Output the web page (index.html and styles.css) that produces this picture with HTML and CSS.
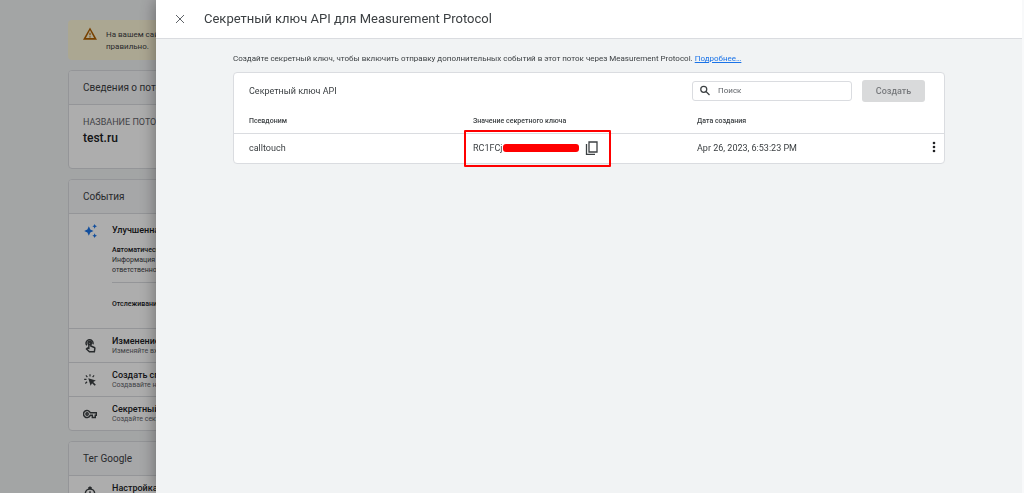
FILE: index.html
```html
<!DOCTYPE html>
<html lang="ru">
<head>
<meta charset="utf-8">
<title>Секретный ключ API для Measurement Protocol</title>
<link rel="stylesheet" href="styles.css">
</head>
<body>
<main class="page">
  <div class="banner">
    <svg class="icon" viewBox="0 0 24 24" fill="#b06000"><path d="M12 5.500 19 19H5L12 5.500M12 1 0 22h24L12 1zm1 15h-2v2h2v-2zm0-6h-2v4h2v-4z"/></svg>
    <p>На вашем сайте<br>правильно.</p>
  </div>
  <section class="card stream">
    <h2 class="card-head">Сведения о потоке</h2>
    <div class="stream-body">
      <div class="stream-label">НАЗВАНИЕ ПОТОКА</div>
      <div class="stream-name">test.ru</div>
    </div>
  </section>
  <section class="card">
    <h2 class="card-head">События</h2>
    <div class="item enhanced">
      <svg class="icon" viewBox="0 0 24 24" fill="#1a73e8"><path d="m20 8 1.250-2.750L24 4l-2.750-1.250L20 0l-1.250 2.750L16 4l2.750 1.250zM20 16l-1.250 2.750L16 20l2.750 1.250L20 24l1.250-2.750L24 20l-2.750-1.250zM12.500 9.500 10 4 7.500 9.500 2 12l5.500 2.500L10 20l2.500-5.500L18 12z"/></svg>
      <div class="item-text">
        <h3>Улучшенная статистика</h3>
        <p class="details"><b>Автоматический</b><br>Информация<br>ответственность</p>
        <p class="tracking"><b>Отслеживание</b></p>
      </div>
    </div>
    <div class="item">
      <svg class="icon" viewBox="0 0 24 24" fill="none" stroke="#3c4043" stroke-width="2.500"><path d="M6.500 11A6 6 0 1 1 17 9M10 15V7a1.700 1.700 0 0 1 3.400 0v5l6 2.500a1.500 1.500 0 0 1 .9 1.600L19.500 22H11l-5-5 1.500-1.500L10 16z"/><circle cx="11.500" cy="7" r="3"/></svg>
      <div class="item-text"><h3>Изменение событий</h3><p>Изменяйте входящие</p></div>
    </div>
    <div class="item">
      <svg class="icon" viewBox="0 0 24 24" fill="none" stroke="#3c4043" stroke-width="2"><path d="M12 2v4M5 4l2.500 3M2 11h4M19 4l-2.500 3M4 18l3-3"/><path fill="#3c4043" stroke="none" d="m9 9 4 13 2.500-4.500L20 22l2-2-4.500-4.500L22 13z"/></svg>
      <div class="item-text"><h3>Создать специальные</h3><p>Создавайте новые</p></div>
    </div>
    <div class="item">
      <svg class="icon" viewBox="0 0 24 24" fill="none" stroke="#3c4043" stroke-width="2.500"><path d="M12.500 10H23v4h-2v4h-5v-4h-3.500a6 6 0 1 1 0-4z"/><circle cx="7" cy="12" r="2"/></svg>
      <div class="item-text"><h3>Секретный ключ</h3><p>Создайте секретный</p></div>
    </div>
  </section>
  <section class="card">
    <h2 class="card-head">Тег Google</h2>
    <div class="item">
      <svg class="icon" viewBox="0 0 24 24" fill="none" stroke="#3c4043" stroke-width="2.500"><path d="M9 4l3-2 3 2"/><circle cx="12" cy="13" r="8"/><path d="M12 9v4l3 2"/></svg>
      <div class="item-text"><h3>Настройка тега</h3></div>
    </div>
  </section>
</main>

<div class="scrim"></div>

<div class="drawer" role="dialog" aria-labelledby="title">
  <header class="drawer-head">
    <button class="icon-button" type="button" aria-label="Закрыть">
      <svg class="close" viewBox="0 0 10 10" fill="none" stroke="#5f6368" stroke-width="1"><path d="M1 1l8 8M9 1 1 9"/></svg>
    </button>
    <h1 id="title">Секретный ключ API для Measurement Protocol</h1>
  </header>
  <div class="drawer-body">
    <p class="intro">Создайте секретный ключ, чтобы включить отправку дополнительных событий в этот поток через Measurement Protocol. <a href="#more">Подробнее…</a></p>
    <section class="keys">
      <div class="toolbar">
        <h2>Секретный ключ API</h2>
        <label class="search">
          <svg viewBox="0 0 24 24" fill="none" stroke="#3c4043" stroke-width="2.500"><circle cx="9.500" cy="8.500" r="6"/><path d="m14 13 7 7"/></svg>
          <input type="search" placeholder="Поиск" aria-label="Поиск">
        </label>
        <button class="create" type="button" disabled>Создать</button>
      </div>
      <table>
        <thead>
          <tr><th class="col">Псевдоним</th><th class="col">Значение секретного ключа</th><th colspan="2">Дата создания</th></tr>
        </thead>
        <tbody>
          <tr>
            <td>calltouch</td>
            <td>
              <div class="secret">
                <span class="prefix">RC1FCj</span><span class="redaction"></span>
                <button class="icon-button" type="button" aria-label="Копировать">
                  <svg class="copy" viewBox="0 0 14 14" fill="none" stroke="#3c4043" stroke-width="1.300"><path d="M4 1h8v10H4zM1.500 3v10.300h8.500"/></svg>
                </button>
                <span class="highlight"></span>
              </div>
            </td>
            <td>Apr 26, 2023, 6:53:23 PM</td>
            <td class="menu">
              <button class="icon-button" type="button" aria-label="Меню">
                <svg class="dots" viewBox="0 0 4 12" fill="#202124"><circle cx="2" cy="2" r="1.300"/><circle cx="2" cy="6" r="1.300"/><circle cx="2" cy="10" r="1.300"/></svg>
              </button>
            </td>
          </tr>
        </tbody>
      </table>
    </section>
  </div>
</div>
</body>
</html>
```
FILE: styles.css
```css
* { box-sizing: border-box; }

body {
  margin: 0;
  background: #f1f3f4;
  color: #3c4043;
  font: 8px/10px Roboto, "Noto Sans", sans-serif;
}

h1, h2, h3, p { margin: 0; font-weight: 400; }
svg { display: block; flex: none; }

/* Page behind the drawer */
.page {
  display: flex;
  flex-direction: column;
  gap: 10px;
  height: 100vh;
  padding: 20px 68px 0;
  overflow: hidden;
  white-space: nowrap;
}
.icon { width: 14px; height: 14px; }
.banner {
  display: flex;
  flex: none;
  gap: 9px;
  height: 40px;
  padding: 7px 15px;
  border-radius: 4px;
  background: #fdf6d8;
  line-height: 12px;
}
.banner p { padding-top: 2px; }
.card {
  flex: none;
  border: 1px solid #dadce0;
  border-radius: 4px;
  background: #fff;
  overflow: hidden;
}
.card-head {
  padding: 9px 14px 8px;
  background: #f5f6f8;
  font-size: 10px;
  line-height: 16px;
}
.stream-body {
  padding: 11px 14px 20px;
  border-top: 1px solid #dadce0;
}
.stream-label { color: #5f6368; font-size: 9px; line-height: 12px; }
.stream-name { color: #202124; font-size: 12px; font-weight: 500; line-height: 20px; }
.item {
  display: flex;
  align-items: center;
  gap: 15px;
  min-height: 34px;
  padding: 0 14px;
  border-top: 1px solid #dadce0;
}
.item h3 { color: #202124; font-size: 9px; font-weight: 500; }
.item p { color: #5f6368; font-size: 7px; }
.item b { color: #202124; font-weight: 500; }
.item-text { flex: 1; min-height: 20px; }
.item .details {
  padding-bottom: 7px;
  border-bottom: 1px solid #dadce0;
  color: #3c4043;
}
.enhanced { align-items: flex-start; padding: 10px 14px 19px; }
.enhanced h3 { padding: 1px 0 10px; }
.tracking { padding-top: 16px; }

.scrim {
  position: fixed;
  inset: 0;
  background: rgba(0, 0, 0, 0.32);
}

/* Drawer */
.drawer {
  position: fixed;
  inset: 0 0 0 156px;
  border-right: 2px solid #f8f9fa;
  background: #f1f3f4;
  box-shadow: 0 0 16px rgba(0, 0, 0, 0.4);
}
.drawer-head {
  display: flex;
  align-items: center;
  gap: 18px;
  height: 39px;
  padding: 0 18px;
  border-bottom: 1px solid #dadce0;
  background: #fff;
}
.drawer-head h1 { font-size: 13px; line-height: 20px; }
.icon-button {
  padding: 0;
  border: 0;
  background: none;
}
.close { width: 12px; height: 10px; }
.drawer-body {
  max-width: 712px;
  margin: 0 auto;
  padding-top: 15px;
}
.intro { font-size: 8px; line-height: 10px; }
.intro a { color: #1a73e8; }

.keys {
  margin-top: 8px;
  border: 1px solid #dadce0;
  border-radius: 4px;
  background: #fff;
}
.toolbar {
  display: flex;
  align-items: center;
  gap: 10px;
  padding: 7px 19px 7px 15px;
}
.toolbar h2 { flex: 1; font-size: 9px; }
.search {
  display: flex;
  align-items: center;
  gap: 7px;
  width: 160px;
  height: 20px;
  padding: 0 6px;
  border: 1px solid #dadce0;
  border-radius: 3px;
}
.search svg { width: 12px; height: 12px; }
.search input {
  flex: 1;
  min-width: 0;
  padding: 0;
  border: 0;
  outline: 0;
  background: none;
  font: inherit;
}
.search input::placeholder { color: #5f6368; }
.create {
  width: 63px;
  height: 22px;
  padding: 0;
  border: 0;
  border-radius: 3px;
  background: #d9dadb;
  color: #77797c;
  font: 500 9px/12px Roboto, sans-serif;
}

table {
  width: 100%;
  border-collapse: collapse;
  table-layout: fixed;
  text-align: left;
}
th, td { padding: 0 0 0 15px; }
th { height: 24px; font-size: 7px; font-weight: 500; }
.col { width: 224px; }
td { height: 30px; border-top: 1px solid #dadce0; font-size: 9px; }
.menu { text-align: right; padding-right: 8px; }
.dots { width: 4px; height: 12px; }

.secret {
  position: relative;
  display: flex;
  align-items: center;
  width: 128px;
}
.prefix { width: 30px; }
.redaction {
  width: 76px;
  height: 8px;
  margin-right: 6px;
  border-radius: 3px;
  background: #f00;
}
.copy { width: 14px; height: 14px; }
.highlight {
  position: absolute;
  inset: -11px -10px -12px -9px;
  border: 2px solid #f00;
  border-radius: 1px;
  pointer-events: none;
}
```
